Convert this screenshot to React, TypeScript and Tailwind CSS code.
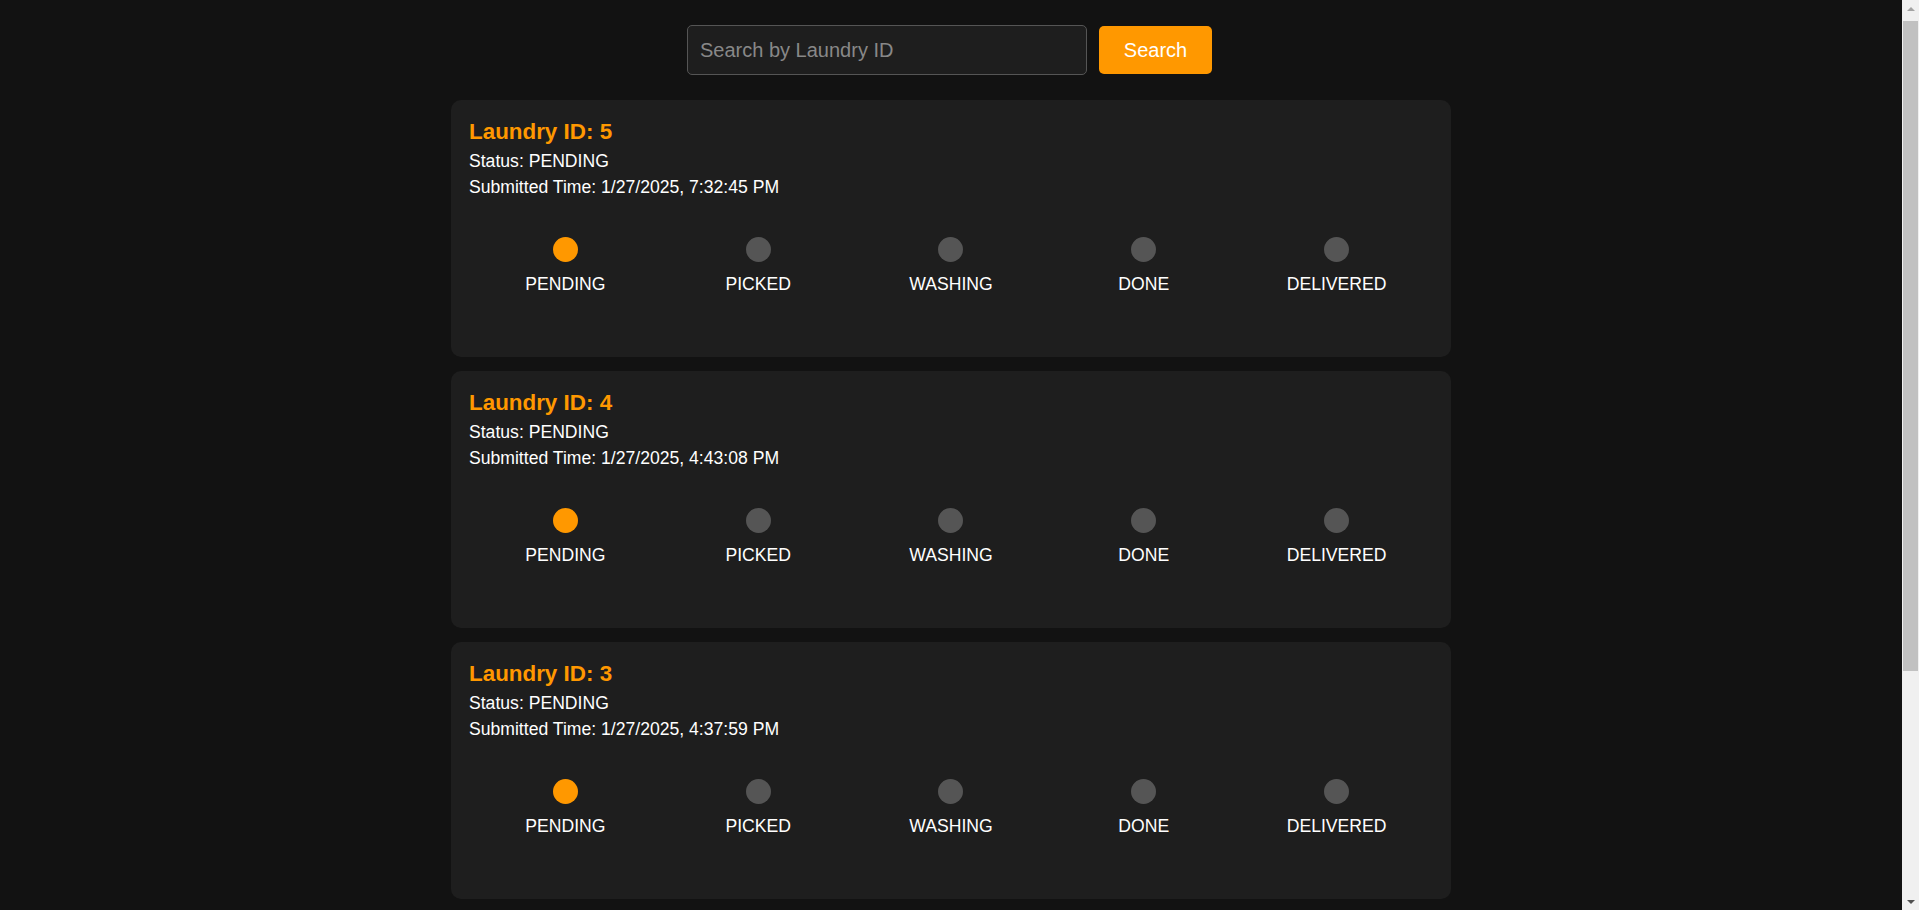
import { useState } from "react";

const steps = ["PENDING", "PICKED", "WASHING", "DONE", "DELIVERED"];

const laundries = [
  { id: 5, status: "PENDING", time: "1/27/2025, 7:32:45 PM" },
  { id: 4, status: "PENDING", time: "1/27/2025, 4:43:08 PM" },
  { id: 3, status: "PENDING", time: "1/27/2025, 4:37:59 PM" },
  { id: 2, status: "PENDING", time: "1/27/2025, 4:21:14 PM" },
];

const LaundryCard = ({ id, status, time }: { id: number; status: string; time: string }) => {
  const current = steps.indexOf(status);
  return (
    <div className="w-[1000px] h-[257px] bg-[#1e1e1e] rounded-[10px] px-[18px] pt-[19px]">
      <h3 className="text-[22.4px] leading-[25px] font-bold text-[#ff9800] mb-[4px]">
        Laundry ID: {id}
      </h3>
      <p className="text-[17.6px] leading-[26.4px] text-white">Status: {status}</p>
      <p className="text-[17.6px] leading-[26.4px] text-white">Submitted Time: {time}</p>

      <div className="grid grid-cols-5 mt-[36px]">
        {steps.map((step, i) => (
          <div key={step} className="flex flex-col items-center">
            <div
              className={
                i <= current
                  ? "w-[25px] h-[25px] rounded-full bg-[#ff9800]"
                  : "w-[25px] h-[25px] rounded-full bg-[#555555]"
              }
            ></div>
            <span className="mt-[12px] text-[17.6px] leading-[20px] text-white">{step}</span>
          </div>
        ))}
      </div>
    </div>
  );
};

// stand-in for the browser scrollbar seen in the screenshot
const ScrollBar = () => (
  <div className="sticky top-0 h-screen w-[17px] shrink-0 bg-[#f0f0f0] flex flex-col items-center">
    <div className="h-[17px] flex items-center justify-center">
      <div className="w-0 h-0 border-l-[4px] border-r-[4px] border-b-[4px] border-l-transparent border-r-transparent border-b-[#a3a3a3]"></div>
    </div>
    <div className="w-[15px] h-[650px] mt-[4px] bg-[#c1c1c1]"></div>
    <div className="flex-1"></div>
    <div className="h-[17px] flex items-center justify-center">
      <div className="w-0 h-0 border-l-[4px] border-r-[4px] border-t-[4px] border-l-transparent border-r-transparent border-t-[#505050]"></div>
    </div>
  </div>
);

export default function App() {
  const [query, setQuery] = useState("");

  const filtered = laundries.filter((l) =>
    query.trim() === "" ? true : String(l.id) === query.trim()
  );

  return (
    <div
      className="min-h-screen bg-[#121212] flex flex-row items-start"
      style={{ fontFamily: '"Liberation Sans", Arial, sans-serif' }}
    >
      <div className="flex-1 pt-[25px] pb-[57px] flex flex-col items-center">
        <div className="flex flex-row items-center gap-[12px] mb-[25px] mr-[3px]">
          <input
            type="text"
            placeholder="Search by Laundry ID"
            value={query}
            onChange={(e) => setQuery(e.target.value)}
            className="w-[400px] h-[50px] px-[12px] bg-[#1e1e1e] border border-[#555555] rounded-[5px] text-[20px] text-white placeholder:text-[#888888] outline-none"
          />
          <button className="w-[113px] h-[48px] bg-[#ff9800] rounded-[5px] text-[20px] text-white">
            Search
          </button>
        </div>

        <div className="flex flex-col gap-[14px]">
          {filtered.map((l) => (
            <LaundryCard key={l.id} id={l.id} status={l.status} time={l.time} />
          ))}
        </div>
      </div>
      <ScrollBar />
    </div>
  );
}
